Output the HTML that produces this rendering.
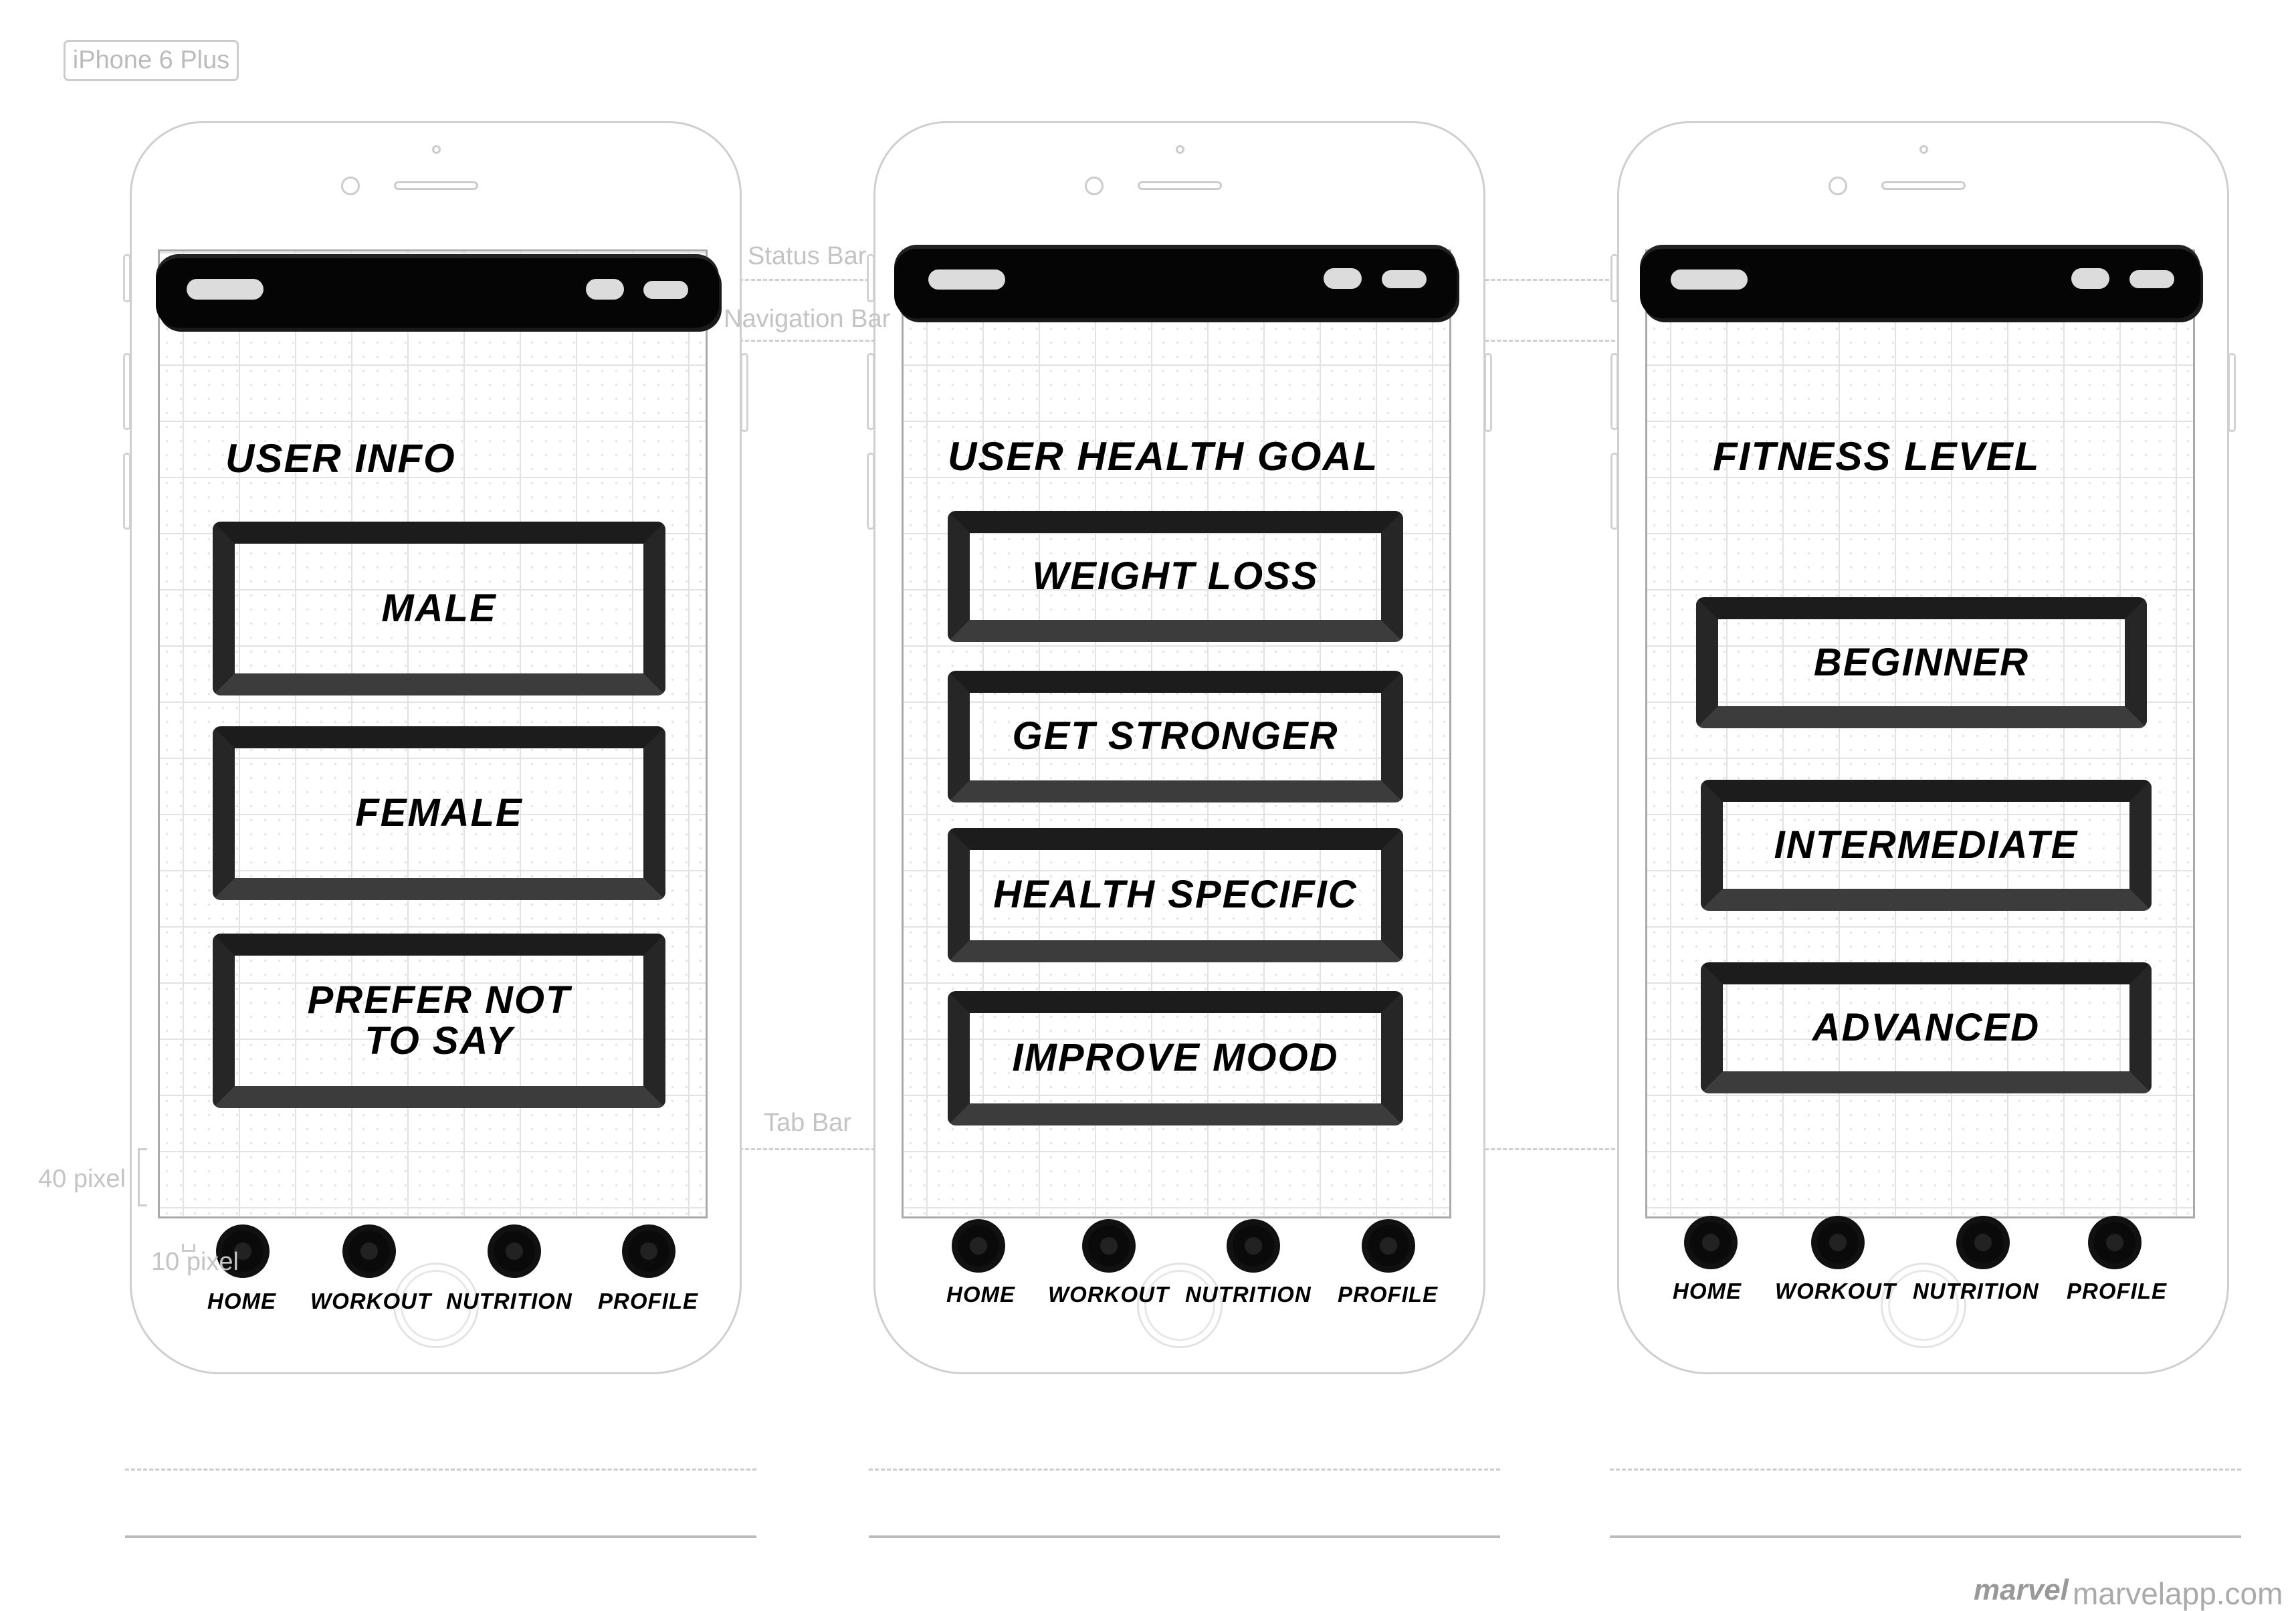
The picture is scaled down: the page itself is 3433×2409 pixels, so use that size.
<!DOCTYPE html>
<html><head><meta charset="utf-8">
<style>
*{margin:0;padding:0;box-sizing:border-box}
body{width:3433px;height:2375px;background:#fff;position:relative;overflow:hidden;font-family:"Liberation Sans",sans-serif}
.abs{position:absolute}
.ph{position:absolute;top:0;width:1300px;height:2375px}
.body{position:absolute;left:194px;top:181px;width:915px;height:1874px;border:3px solid #cfcfcf;border-radius:110px 110px 135px 135px;background:#fff}
.bump{position:absolute;width:12px;border:3px solid #d2d2d2;border-radius:5px;background:#fff}
.screen{position:absolute;left:236px;top:373px;width:822px;height:1449px;border:3px solid #aaa;
background-color:#fff;
background-image:
repeating-linear-gradient(90deg,transparent 0 82px,#e2e2e2 82px 84px),
repeating-linear-gradient(0deg,transparent 0 82px,#e2e2e2 82px 84px),
radial-gradient(circle,#e4e4e4 1.5px,transparent 2px);
background-size:84px 84px,84px 84px,21px 21px;
background-position:-48px -83px,-48px -83px,0 0}
.sb{position:absolute;height:104px;background:#050505;border-radius:34px;box-shadow:0 -6px 0 #222, 4px 6px 0 #1a1a1a}
.pill{position:absolute;background:#dcdcdc;border-radius:16px}
.title{position:absolute;font-weight:bold;font-style:italic;font-size:60px;color:#000;letter-spacing:2px;line-height:1;white-space:nowrap}
.box{position:absolute;border:33px solid #262626;border-top-color:#1c1c1c;border-bottom-color:#3c3c3c;border-radius:12px;display:flex;align-items:center;justify-content:center;text-align:center;font-weight:bold;font-style:italic;font-size:58px;line-height:1.05;color:#000;letter-spacing:2px}
.dot{position:absolute;width:80px;height:80px;border-radius:50%;background:radial-gradient(circle,#222 0 12px,#0a0a0a 14px 30px,#111 32px);}
.tl{position:absolute;font-weight:bold;font-style:italic;font-size:33px;color:#000;white-space:nowrap;line-height:1;letter-spacing:1px}
.home{position:absolute;width:128px;height:128px;border:3px solid #e3e3e3;border-radius:50%}
.home:after{content:"";position:absolute;left:8px;top:8px;right:8px;bottom:8px;border:3px solid #e8e8e8;border-radius:50%}
.g{color:#c4c4c4;font-size:38px;position:absolute;white-space:nowrap;line-height:1}
.dash{position:absolute;height:0;border-top:3px dashed #cfcfcf}
</style></head><body>

<div class="abs" style="left:95px;top:60px;width:262px;height:61px;border:3px solid #ccc;border-radius:7px;color:#bbb;font-size:38px;text-align:center;line-height:55px">iPhone 6 Plus</div>

<div class="dash" style="left:1060px;top:417px;width:1400px"></div>
<div class="dash" style="left:1060px;top:508px;width:1400px"></div>
<div class="dash" style="left:1060px;top:1717px;width:1400px"></div>

<!-- PHONE 1 -->
<div class="ph" style="left:0">
 <div class="bump" style="left:184px;top:380px;height:72px"></div>
 <div class="bump" style="left:184px;top:528px;height:115px"></div>
 <div class="bump" style="left:184px;top:677px;height:115px"></div>
 <div class="bump" style="left:1107px;top:528px;height:118px"></div>
 <div class="body"></div>
 <div class="abs" style="left:646px;top:217px;width:13px;height:13px;border:3px solid #ccc;border-radius:50%"></div>
 <div class="abs" style="left:510px;top:264px;width:28px;height:28px;border:3px solid #ccc;border-radius:50%"></div>
 <div class="abs" style="left:589px;top:271px;width:126px;height:13px;border:3px solid #ccc;border-radius:8px"></div>
 <div class="home" style="left:588px;top:1888px"></div>
 <div class="screen"></div>
 <div class="sb" style="left:233px;top:386px;width:842px"></div>
 <div class="pill" style="left:279px;top:417px;width:115px;height:31px"></div>
 <div class="pill" style="left:876px;top:417px;width:57px;height:31px"></div>
 <div class="pill" style="left:962px;top:420px;width:67px;height:27px"></div>
 <div class="title" style="left:337px;top:656px">USER INFO</div>
 <div class="box" style="left:318px;top:780px;width:677px;height:260px">MALE</div>
 <div class="box" style="left:318px;top:1086px;width:677px;height:260px">FEMALE</div>
 <div class="box" style="left:318px;top:1396px;width:677px;height:261px">PREFER NOT<br>TO SAY</div>
 <div class="dot" style="left:323px;top:1831px"></div>
 <div class="dot" style="left:512px;top:1831px"></div>
 <div class="dot" style="left:729px;top:1831px"></div>
 <div class="dot" style="left:930px;top:1831px"></div>
 <div class="tl" style="left:310px;top:1929px">HOME</div>
 <div class="tl" style="left:464px;top:1929px">WORKOUT</div>
 <div class="tl" style="left:667px;top:1929px">NUTRITION</div>
 <div class="tl" style="left:894px;top:1929px">PROFILE</div>
 <div class="abs" style="left:187px;top:2196px;width:944px;border-top:3px dashed #ccc"></div>
 <div class="abs" style="left:187px;top:2296px;width:944px;height:4px;background:#bbb"></div>
</div>

<!-- PHONE 2 -->
<div class="ph" style="left:1112px">
 <div class="bump" style="left:184px;top:380px;height:72px"></div>
 <div class="bump" style="left:184px;top:528px;height:115px"></div>
 <div class="bump" style="left:184px;top:677px;height:115px"></div>
 <div class="bump" style="left:1107px;top:528px;height:118px"></div>
 <div class="body"></div>
 <div class="abs" style="left:646px;top:217px;width:13px;height:13px;border:3px solid #ccc;border-radius:50%"></div>
 <div class="abs" style="left:510px;top:264px;width:28px;height:28px;border:3px solid #ccc;border-radius:50%"></div>
 <div class="abs" style="left:589px;top:271px;width:126px;height:13px;border:3px solid #ccc;border-radius:8px"></div>
 <div class="home" style="left:588px;top:1888px"></div>
 <div class="screen"></div>
 <div class="sb" style="left:225px;top:372px;width:841px"></div>
 <div class="pill" style="left:276px;top:403px;width:115px;height:30px"></div>
 <div class="pill" style="left:867px;top:401px;width:57px;height:31px"></div>
 <div class="pill" style="left:954px;top:404px;width:67px;height:27px"></div>
 <div class="title" style="left:305px;top:653px">USER HEALTH GOAL</div>
 <div class="box" style="left:305px;top:764px;width:681px;height:196px">WEIGHT LOSS</div>
 <div class="box" style="left:305px;top:1003px;width:681px;height:197px">GET STRONGER</div>
 <div class="box" style="left:305px;top:1238px;width:681px;height:201px">HEALTH SPECIFIC</div>
 <div class="box" style="left:305px;top:1482px;width:681px;height:201px">IMPROVE MOOD</div>
 <div class="dot" style="left:311px;top:1823px"></div>
 <div class="dot" style="left:506px;top:1823px"></div>
 <div class="dot" style="left:722px;top:1823px"></div>
 <div class="dot" style="left:924px;top:1823px"></div>
 <div class="tl" style="left:303px;top:1919px">HOME</div>
 <div class="tl" style="left:455px;top:1919px">WORKOUT</div>
 <div class="tl" style="left:660px;top:1919px">NUTRITION</div>
 <div class="tl" style="left:888px;top:1919px">PROFILE</div>
 <div class="abs" style="left:187px;top:2196px;width:944px;border-top:3px dashed #ccc"></div>
 <div class="abs" style="left:187px;top:2296px;width:944px;height:4px;background:#bbb"></div>
</div>

<!-- PHONE 3 -->
<div class="ph" style="left:2224px">
 <div class="bump" style="left:184px;top:380px;height:72px"></div>
 <div class="bump" style="left:184px;top:528px;height:115px"></div>
 <div class="bump" style="left:184px;top:677px;height:115px"></div>
 <div class="bump" style="left:1107px;top:528px;height:118px"></div>
 <div class="body"></div>
 <div class="abs" style="left:646px;top:217px;width:13px;height:13px;border:3px solid #ccc;border-radius:50%"></div>
 <div class="abs" style="left:510px;top:264px;width:28px;height:28px;border:3px solid #ccc;border-radius:50%"></div>
 <div class="abs" style="left:589px;top:271px;width:126px;height:13px;border:3px solid #ccc;border-radius:8px"></div>
 <div class="home" style="left:588px;top:1888px"></div>
 <div class="screen"></div>
 <div class="sb" style="left:228px;top:372px;width:838px"></div>
 <div class="pill" style="left:274px;top:403px;width:115px;height:30px"></div>
 <div class="pill" style="left:873px;top:401px;width:57px;height:31px"></div>
 <div class="pill" style="left:960px;top:404px;width:67px;height:27px"></div>
 <div class="title" style="left:337px;top:653px">FITNESS LEVEL</div>
 <div class="box" style="left:312px;top:893px;width:674px;height:196px">BEGINNER</div>
 <div class="box" style="left:319px;top:1166px;width:674px;height:196px">INTERMEDIATE</div>
 <div class="box" style="left:319px;top:1439px;width:674px;height:196px">ADVANCED</div>
 <div class="dot" style="left:294px;top:1818px"></div>
 <div class="dot" style="left:484px;top:1818px"></div>
 <div class="dot" style="left:701px;top:1818px"></div>
 <div class="dot" style="left:898px;top:1818px"></div>
 <div class="tl" style="left:277px;top:1914px">HOME</div>
 <div class="tl" style="left:430px;top:1914px">WORKOUT</div>
 <div class="tl" style="left:636px;top:1914px">NUTRITION</div>
 <div class="tl" style="left:866px;top:1914px">PROFILE</div>
 <div class="abs" style="left:183px;top:2196px;width:944px;border-top:3px dashed #ccc"></div>
 <div class="abs" style="left:183px;top:2296px;width:944px;height:4px;background:#bbb"></div>
</div>

<div class="g" style="left:1118px;top:364px">Status Bar</div>
<div class="g" style="left:1082px;top:458px">Navigation Bar</div>
<div class="g" style="left:1142px;top:1660px">Tab Bar</div>
<div class="g" style="left:57px;top:1744px">40 pixel</div>
<div class="abs" style="left:206px;top:1717px;width:14px;height:87px;border:3px solid #ccc;border-right:none"></div>
<div class="g" style="left:226px;top:1868px">10 pixel</div>
<div class="abs" style="left:272px;top:1860px;width:20px;height:12px;border:3px solid #ccc;border-top:none"></div>

<div class="abs" style="left:2951px;top:2356px;font-size:44px;font-weight:bold;font-style:italic;color:#999;line-height:1">marvel</div>
<div class="abs" style="left:3099px;top:2360px;font-size:46px;color:#aaa;line-height:1">marvelapp.com</div>
</body></html>
